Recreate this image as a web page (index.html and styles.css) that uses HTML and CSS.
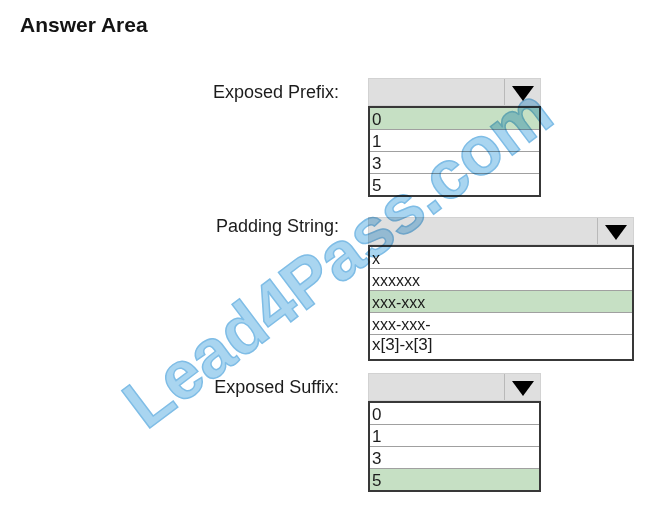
FILE: index.html
```html
<!DOCTYPE html>
<html lang="en">
<head>
    <meta charset="UTF-8">
    <meta name="viewport" content="width=device-width, initial-scale=1.0">
    <title>Answer Area</title>
    <link rel="stylesheet" href="styles.css">
</head>
<body>

    <div class="answer-area">
        <h1 class="title">Answer Area</h1>

        <!-- Exposed prefix -->
        <div class="field">
            <div class="field-label">Exposed Prefix:</div>
            <div class="select select--short">
                <div class="select-head">
                    <div class="select-value"></div>
                    <div class="select-arrow"><span class="triangle"></span></div>
                </div>
                <div class="select-list">
                    <div class="option selected">0</div>
                    <div class="option">1</div>
                    <div class="option">3</div>
                    <div class="option">5</div>
                </div>
            </div>
        </div>

        <!-- Padding string -->
        <div class="field field--padding">
            <div class="field-label field-label--raised">Padding String:</div>
            <div class="select select--wide">
                <div class="select-head">
                    <div class="select-value"></div>
                    <div class="select-arrow"><span class="triangle"></span></div>
                </div>
                <div class="select-list">
                    <div class="option option--text">x</div>
                    <div class="option option--text">xxxxxx</div>
                    <div class="option option--text selected">xxx-xxx</div>
                    <div class="option option--text">xxx-xxx-</div>
                    <div class="option option--text option--last">x[3]-x[3]</div>
                </div>
            </div>
        </div>

        <!-- Exposed suffix -->
        <div class="field field--suffix">
            <div class="field-label">Exposed Suffix:</div>
            <div class="select select--short">
                <div class="select-head">
                    <div class="select-value"></div>
                    <div class="select-arrow"><span class="triangle"></span></div>
                </div>
                <div class="select-list">
                    <div class="option">0</div>
                    <div class="option">1</div>
                    <div class="option">3</div>
                    <div class="option selected">5</div>
                </div>
            </div>
        </div>

        <!-- Watermark over the page -->
        <div class="watermark">Lead4Pass.com</div>
    </div>

</body>
</html>
```

FILE: styles.css
```css
/* Page */
body {
    margin: 0;
    background-color: #ffffff;
    font-family: "Liberation Sans", Arial, sans-serif;
    color: #1c1c1c;
}

.answer-area {
    position: relative;
    padding: 13px 20px 0 20px;
    min-height: 496px;
    overflow: hidden;
}

.title {
    margin: 0 0 41px 0;
    font-size: 21px;
    line-height: 24px;
    font-weight: bold;
    color: #141414;
}

/* One label + dropdown row */
.field {
    display: grid;
    grid-template-columns: 320px auto;
    column-gap: 28px;
    align-items: start;
}

.field--padding {
    margin-top: 20px;
}

.field--suffix {
    margin-top: 12px;
}

.field-label {
    text-align: right;
    font-size: 18px;
    line-height: 28px;
    padding-right: 1px;
}

.field-label--raised {
    margin-top: -5px;
}

/* Dropdown */
.select--short {
    width: 173px;
}

.select--wide {
    width: 266px;
}

.select-head {
    display: flex;
    height: 28px;
    box-sizing: border-box;
    background-color: #dfdfdf;
    border: 1px solid #d2d2d2;
}

.select-value {
    flex: 1;
}

.select-arrow {
    width: 36px;
    border-left: 1px solid #b9b9b9;
    display: flex;
    align-items: center;
    justify-content: center;
    padding-top: 2px;
    box-sizing: border-box;
}

.triangle {
    width: 0;
    height: 0;
    border-left: 11px solid transparent;
    border-right: 11px solid transparent;
    border-top: 15px solid #000000;
}

.select-list {
    border: 2px solid #383838;
    background-color: #ffffff;
}

.option {
    height: 21px;
    line-height: 23px;
    padding-left: 2px;
    font-size: 17px;
    border-bottom: 1px solid #a0a0a0;
}

.option:last-child {
    border-bottom: none;
}

.option--text {
    font-size: 16px;
}

.option--last {
    height: 24px;
    line-height: 20px;
    font-size: 17px;
}

.selected {
    background-color: #c6e0c4;
}

/* Watermark */
.watermark {
    position: absolute;
    left: 72px;
    top: 222px;
    width: 530px;
    text-align: center;
    font-size: 68px;
    line-height: 70px;
    font-weight: bold;
    color: #a9d5f0;
    -webkit-text-stroke: 1.5px #7fbde6;
    transform: rotate(-37deg);
    mix-blend-mode: multiply;
    pointer-events: none;
}
```
